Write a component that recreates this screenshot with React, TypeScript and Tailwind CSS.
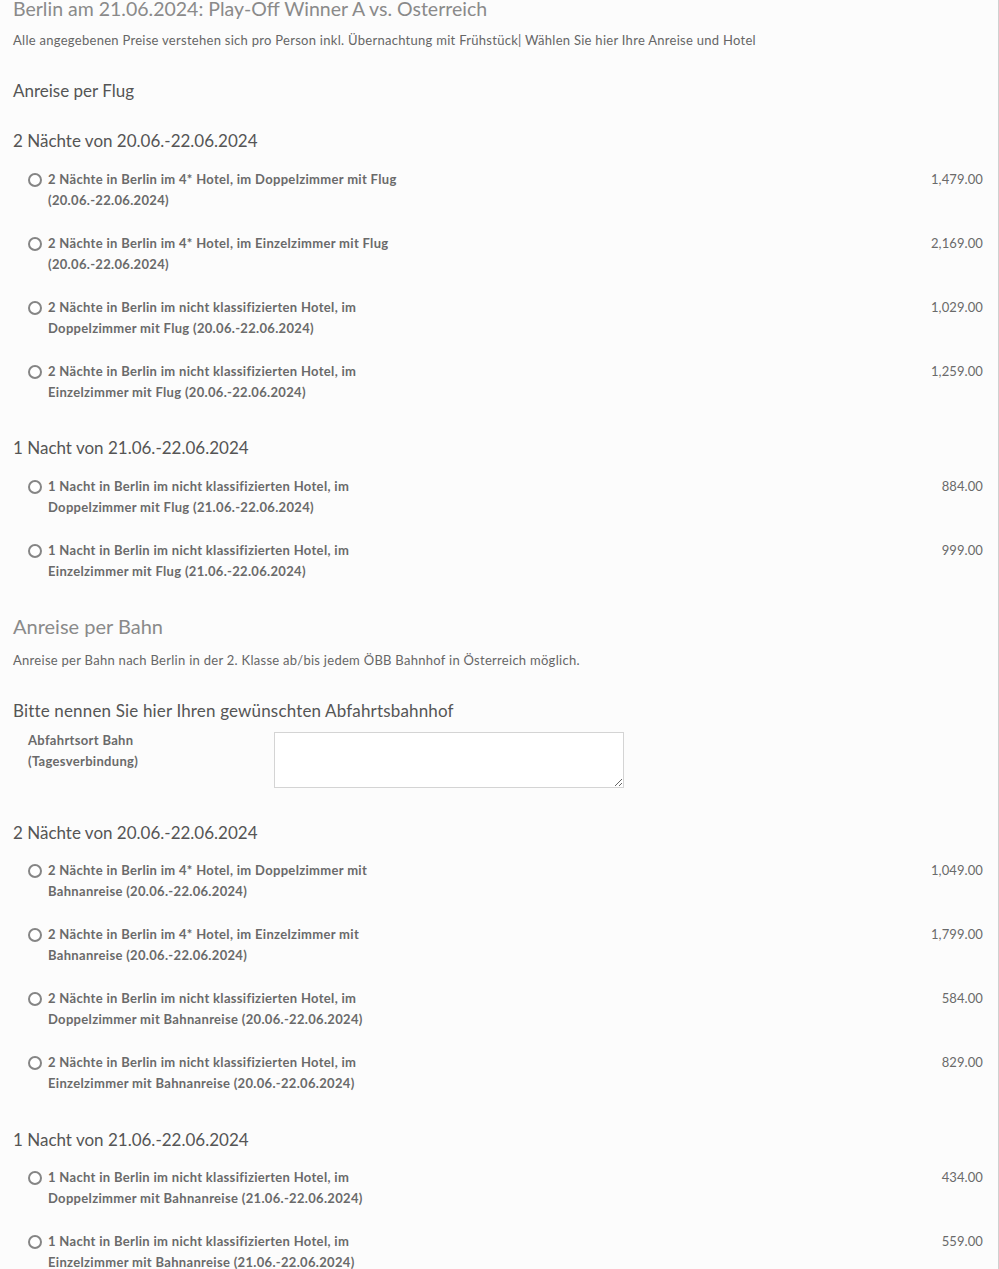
import React from 'react';

type Option = { label: string; price: string };

const flug2: Option[] = [
  { label: '2 Nächte in Berlin im 4* Hotel, im Doppelzimmer mit Flug (20.06.-22.06.2024)', price: '1,479.00' },
  { label: '2 Nächte in Berlin im 4* Hotel, im Einzelzimmer mit Flug (20.06.-22.06.2024)', price: '2,169.00' },
  { label: '2 Nächte in Berlin im nicht klassifizierten Hotel, im Doppelzimmer mit Flug (20.06.-22.06.2024)', price: '1,029.00' },
  { label: '2 Nächte in Berlin im nicht klassifizierten Hotel, im Einzelzimmer mit Flug (20.06.-22.06.2024)', price: '1,259.00' },
];

const flug1: Option[] = [
  { label: '1 Nacht in Berlin im nicht klassifizierten Hotel, im Doppelzimmer mit Flug (21.06.-22.06.2024)', price: '884.00' },
  { label: '1 Nacht in Berlin im nicht klassifizierten Hotel, im Einzelzimmer mit Flug (21.06.-22.06.2024)', price: '999.00' },
];

const bahn2: Option[] = [
  { label: '2 Nächte in Berlin im 4* Hotel, im Doppelzimmer mit Bahnanreise (20.06.-22.06.2024)', price: '1,049.00' },
  { label: '2 Nächte in Berlin im 4* Hotel, im Einzelzimmer mit Bahnanreise (20.06.-22.06.2024)', price: '1,799.00' },
  { label: '2 Nächte in Berlin im nicht klassifizierten Hotel, im Doppelzimmer mit Bahnanreise (20.06.-22.06.2024)', price: '584.00' },
  { label: '2 Nächte in Berlin im nicht klassifizierten Hotel, im Einzelzimmer mit Bahnanreise (20.06.-22.06.2024)', price: '829.00' },
];

const bahn1: Option[] = [
  { label: '1 Nacht in Berlin im nicht klassifizierten Hotel, im Doppelzimmer mit Bahnanreise (21.06.-22.06.2024)', price: '434.00' },
  { label: '1 Nacht in Berlin im nicht klassifizierten Hotel, im Einzelzimmer mit Bahnanreise (21.06.-22.06.2024)', price: '559.00' },
];

const OptionRow: React.FC<{ option: Option }> = ({ option }) => (
  <div className="flex items-start">
    <label className="flex items-start pl-[15px] cursor-pointer">
      <span className="mt-[4px] w-[14px] h-[14px] rounded-full border-2 border-[#858585] bg-white shrink-0" />
      <span className="ml-[6px] w-[370px] text-[13px] leading-[21px] tracking-[0.32px] font-bold text-[#6a6a6a]">
        {option.label}
      </span>
    </label>
    <div className="flex-1 text-right text-[13px] leading-[21px] tracking-[0.1px] text-[#6a6a6a]">{option.price}</div>
  </div>
);

const OptionList: React.FC<{ options: Option[] }> = ({ options }) => (
  <div className="flex flex-col gap-[22px]">
    {options.map((o) => (
      <OptionRow key={o.label} option={o} />
    ))}
  </div>
);

const App: React.FC = () => {
  return (
    <div
      className="flex flex-col w-[999px] min-h-[1269px] bg-[#fcfcfc] border-r border-[#d0d0d0] pl-[13px] pr-[15px] overflow-hidden"
      style={{ fontFamily: 'Lato, "Open Sans", sans-serif' }}
    >
      <h1 className="-mt-[3px] text-[19.5px] leading-[24px] text-[#8a8a8a]">
        Berlin am 21.06.2024: Play-Off Winner A vs. Osterreich
      </h1>
      <p className="mt-[9px] text-[13px] leading-[20px] tracking-[0.28px] text-[#666]">
        Alle angegebenen Preise verstehen sich pro Person inkl. Übernachtung mit Frühstück| Wählen Sie hier Ihre Anreise und Hotel
      </p>

      <h2 className="mt-[29px] text-[17px] leading-[24px] text-[#555]">Anreise per Flug</h2>

      <h3 className="mt-[26px] text-[17px] leading-[24px] text-[#555]">2 Nächte von 20.06.-22.06.2024</h3>
      <div className="mt-[16px]">
        <OptionList options={flug2} />
      </div>

      <h3 className="mt-[33px] text-[17px] leading-[24px] text-[#555]">1 Nacht von 21.06.-22.06.2024</h3>
      <div className="mt-[16px]">
        <OptionList options={flug1} />
      </div>

      <h2 className="mt-[32px] text-[20px] leading-[24px] text-[#8a8a8a]">Anreise per Bahn</h2>
      <p className="mt-[12px] text-[13px] leading-[20px] tracking-[0.28px] text-[#666]">
        Anreise per Bahn nach Berlin in der 2. Klasse ab/bis jedem ÖBB Bahnhof in Österreich möglich.
      </p>

      <h3 className="mt-[29px] text-[17px] leading-[24px] tracking-[0.16px] text-[#555]">
        Bitte nennen Sie hier Ihren gewünschten Abfahrtsbahnhof
      </h3>
      <div className="mt-[7px] flex items-start">
        <label className="pl-[15px] w-[261px] text-[13px] leading-[21px] tracking-[0.32px] font-bold text-[#6a6a6a]">
          Abfahrtsort Bahn
          <br />
          (Tagesverbindung)
        </label>
        <textarea className="mt-[2px] w-[350px] h-[56px] border border-[#d4d4d4] bg-white outline-none" />
      </div>

      <h3 className="mt-[33px] text-[17px] leading-[24px] text-[#555]">2 Nächte von 20.06.-22.06.2024</h3>
      <div className="mt-[15px]">
        <OptionList options={bahn2} />
      </div>

      <h3 className="mt-[34px] text-[17px] leading-[24px] text-[#555]">1 Nacht von 21.06.-22.06.2024</h3>
      <div className="mt-[15px]">
        <OptionList options={bahn1} />
      </div>
    </div>
  );
};

export default App;
